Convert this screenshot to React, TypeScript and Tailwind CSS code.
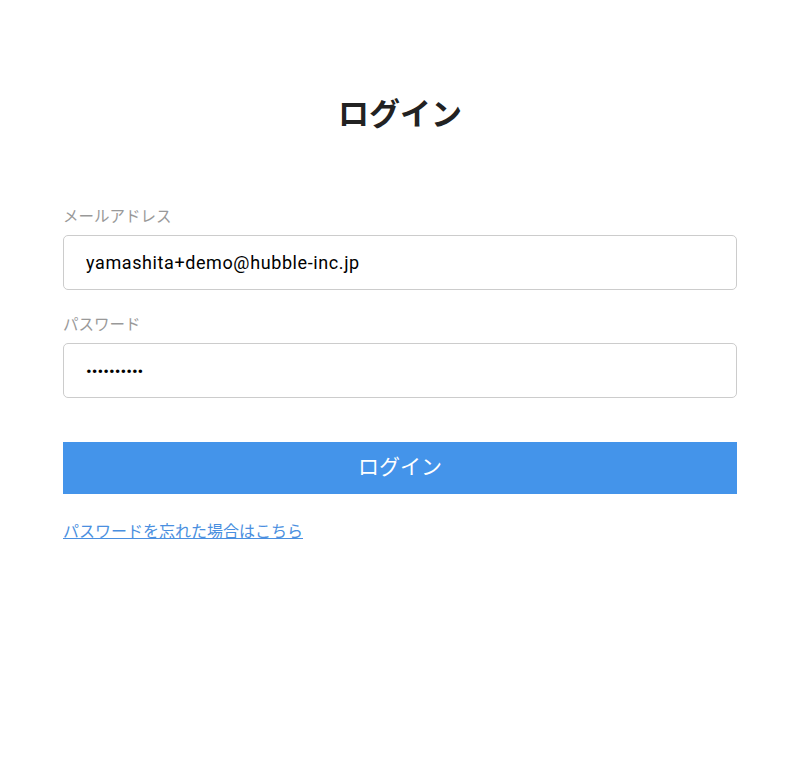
export default function App() {
  return (
    <div
      className="min-h-[781px] bg-white px-[63px]"
      style={{ fontFamily: "Roboto, 'Noto Sans CJK JP', sans-serif" }}
    >
      <h1 className="pt-[95px] text-center text-[31px] font-bold leading-[40px] text-[#222]">
        ログイン
      </h1>

      <form className="mt-[70px] flex flex-col">
        <label className="text-[15.5px] leading-[24px] text-[#999]">
          メールアドレス
        </label>
        <input
          type="email"
          defaultValue="yamashita+demo@hubble-inc.jp"
          className="mt-[6px] h-[55px] w-full rounded-[5px] border border-[#ccc] px-[22px] text-[18px] tracking-[0.6px] text-black outline-none"
        />

        <label className="mt-[23px] text-[15.5px] leading-[24px] text-[#999]">
          パスワード
        </label>
        <input
          type="password"
          defaultValue="passwordxx"
          className="mt-[6px] h-[55px] w-full rounded-[5px] border border-[#ccc] px-[22px] text-[17px] text-black outline-none"
        />

        <button
          type="button"
          className="mt-[44px] h-[52px] w-full bg-[#4494ea] text-[21px] text-white"
        >
          ログイン
        </button>

        <div className="mt-[26px]">
          <a href="#" className="text-[16px] leading-[24px] text-[#4a8fe0] underline">
            パスワードを忘れた場合はこちら
          </a>
        </div>
      </form>
    </div>
  );
}
